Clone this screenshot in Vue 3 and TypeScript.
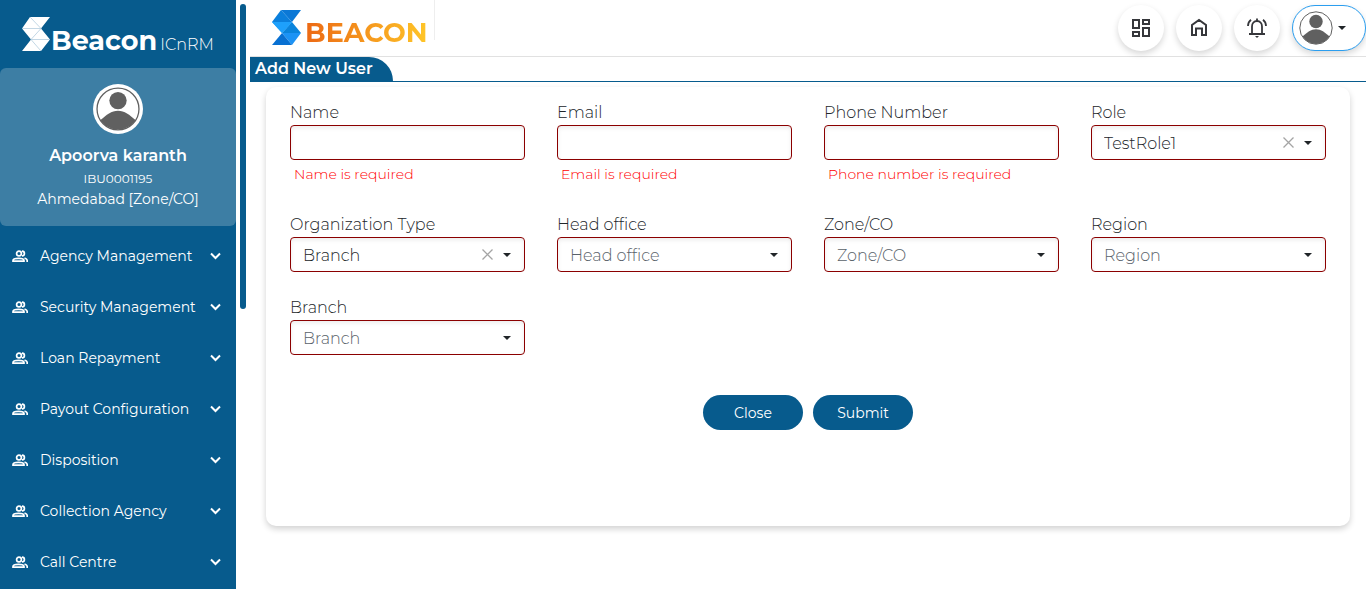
<script setup lang="ts">
import { reactive } from 'vue'

interface Field {
  id: string
  label: string
  kind: 'text' | 'select'
  error?: string
  clearable?: boolean
  options?: string[]
}

const menu: string[] = [
  'Agency Management',
  'Security Management',
  'Loan Repayment',
  'Payout Configuration',
  'Disposition',
  'Collection Agency',
  'Call Centre',
]

const fields: Field[] = [
  { id: 'name', label: 'Name', kind: 'text', error: 'Name is required' },
  { id: 'email', label: 'Email', kind: 'text', error: 'Email is required' },
  { id: 'phone', label: 'Phone Number', kind: 'text', error: 'Phone number is required' },
  { id: 'role', label: 'Role', kind: 'select', clearable: true, options: ['TestRole1'] },
  { id: 'orgType', label: 'Organization Type', kind: 'select', clearable: true, options: ['Branch'] },
  { id: 'headOffice', label: 'Head office', kind: 'select', options: [] },
  { id: 'zone', label: 'Zone/CO', kind: 'select', options: [] },
  { id: 'region', label: 'Region', kind: 'select', options: [] },
  { id: 'branch', label: 'Branch', kind: 'select', options: [] },
]

const form = reactive<Record<string, string>>({
  name: '',
  email: '',
  phone: '',
  role: 'TestRole1',
  orgType: 'Branch',
  headOffice: '',
  zone: '',
  region: '',
  branch: '',
})
</script>

<template>
  <div class="page">
    <aside class="sidebar">
      <div class="brand">
        <svg class="brand-mark" width="28" height="34" viewBox="0 0 28 34" aria-hidden="true">
          <path d="M8 0H28L19 11.500 28 22.500 19 34H0L9 22.500 0 11.500Z" fill="#fff" />
          <path d="M8 0L19 11.500H0M19 11.500L9 22.500H28M9 22.500L19 34" fill="none" stroke="#a9c6da" stroke-width=".7" />
        </svg>
        <span class="brand-name">Beacon</span>
        <span class="brand-suffix">ICnRM</span>
      </div>

      <section class="profile">
        <span class="avatar-ring">
          <svg width="44" height="44" viewBox="0 0 34 34" aria-hidden="true">
            <circle cx="17" cy="17" r="16.200" fill="#fff" stroke="#606060" stroke-width="1" />
            <circle cx="17" cy="10.500" r="6.700" fill="#606060" />
            <path d="M3.500 25.500C8 21.500 12 18.300 17 18.300S26 21.500 30.500 25.500A16 16 0 0 1 3.500 25.500Z" fill="#606060" />
          </svg>
        </span>
        <strong class="profile-name">Apoorva karanth</strong>
        <span class="profile-code">IBU0001195</span>
        <span class="profile-office">Ahmedabad [Zone/CO]</span>
      </section>

      <nav class="menu">
        <button v-for="item in menu" :key="item" type="button" class="menu-item">
          <svg width="16" height="14" viewBox="0 0 16 14" fill="none" stroke="#fff" stroke-width="1.700" aria-hidden="true">
            <circle cx="7" cy="4.500" r="2.400" />
            <path d="M1 12.200V11.500C1 10.100 4 9.300 6.500 9.300S12 10.100 12 11.500V12.200Z" />
            <path d="M10 2.100A2.400 2.400 0 0 1 10 6.900M12.500 9C14.200 9.600 15.200 10.300 15.200 11.500V13" />
          </svg>
          <span class="menu-label">{{ item }}</span>
          <svg width="11" height="8" viewBox="0 0 11 8" fill="none" stroke="#fff" stroke-width="2" aria-hidden="true">
            <path d="M1 1.500L5.500 6 10 1.500" />
          </svg>
        </button>
      </nav>
    </aside>

    <div class="gutter" aria-hidden="true"><div class="thumb"></div></div>

    <div class="main">
      <header class="topbar">
        <div class="logo">
          <svg width="29" height="35" viewBox="0 0 29 35" aria-hidden="true">
            <path d="M9 0H29L20 12Z" fill="#0b78d6" />
            <path d="M9 0L20 12H0Z" fill="#0b7fdc" />
            <path d="M0 12H20L10 23Z" fill="#1ea0fb" />
            <path d="M20 12L29 23H10Z" fill="#0a84dc" />
            <path d="M20 12L10 23L0 12Z" fill="#1ea0fb" />
            <path d="M10 23H29L20 35Z" fill="#1c93f5" />
            <path d="M10 23L20 35H0Z" fill="#0870d2" />
          </svg>
          <span class="logo-text">BEACON</span>
        </div>

        <div class="actions">
          <button type="button" class="round" aria-label="Dashboard">
            <svg width="20" height="20" viewBox="0 0 20 20" fill="none" stroke="#36373b" stroke-width="2" aria-hidden="true">
              <path d="M2 2H8V10H2ZM12 2H18V6H12ZM12 10H18V18H12ZM2 14H8V18H2Z" />
            </svg>
          </button>
          <button type="button" class="round" aria-label="Home">
            <svg width="20" height="20" viewBox="0 0 20 20" fill="none" stroke="#36373b" stroke-width="2" aria-hidden="true">
              <path d="M3 17V7L10 2 17 7V17H13V10.500H7V17Z" />
            </svg>
          </button>
          <button type="button" class="round" aria-label="Notifications">
            <svg width="20" height="20" viewBox="0 0 20 20" fill="none" stroke="#36373b" stroke-width="1.800" aria-hidden="true">
              <path d="M2 16H18M5 16V8.500C5 5.300 7 3 10 3S15 5.300 15 8.500V16M10 .5V3M1 8C1 5 2.300 3 4 1.700M19 8C19 5 17.700 3 16 1.700" />
              <path d="M8 18H12L10 20Z" fill="#36373b" stroke="none" />
            </svg>
          </button>
          <button type="button" class="account" aria-label="Account">
            <svg width="34" height="34" viewBox="0 0 34 34" aria-hidden="true">
              <circle cx="17" cy="17" r="16.200" fill="#fff" stroke="#606060" stroke-width="1" />
              <circle cx="17" cy="10.500" r="6.700" fill="#606060" />
              <path d="M3.500 25.500C8 21.500 12 18.300 17 18.300S26 21.500 30.500 25.500A16 16 0 0 1 3.500 25.500Z" fill="#606060" />
            </svg>
            <svg width="8" height="4" viewBox="0 0 8 4" aria-hidden="true"><path d="M0 0H8L4 4Z" fill="#212529" /></svg>
          </button>
        </div>
      </header>

      <div class="title-row"><h1 class="title">Add New User</h1></div>

      <form class="card" novalidate @submit.prevent>
        <div class="grid">
          <div v-for="f in fields" :key="f.id" class="field">
            <label :for="f.id">{{ f.label }}</label>
            <input v-if="f.kind === 'text'" :id="f.id" v-model="form[f.id]" class="control" type="text" />
            <div v-else class="select-wrap">
              <select :id="f.id" v-model="form[f.id]" class="control" :class="{ empty: !form[f.id] }">
                <option value="">{{ f.label }}</option>
                <option v-for="o in f.options" :key="o" :value="o">{{ o }}</option>
              </select>
              <button
                v-if="f.clearable && form[f.id]"
                type="button"
                class="clear"
                :aria-label="'Clear ' + f.label"
                @click="form[f.id] = ''"
              >
                <svg width="11" height="11" viewBox="0 0 11 11" stroke="#a4a4a4" stroke-width="1.300" aria-hidden="true">
                  <path d="M.5 .5L10.500 10.500M10.500 .5L.5 10.500" />
                </svg>
              </button>
              <svg class="caret" width="8" height="4" viewBox="0 0 8 4" aria-hidden="true"><path d="M0 0H8L4 4Z" fill="#212529" /></svg>
            </div>
            <p v-if="f.error && !form[f.id]" class="error">{{ f.error }}</p>
          </div>
        </div>
        <div class="buttons">
          <button type="button" class="pill">Close</button>
          <button type="submit" class="pill">Submit</button>
        </div>
      </form>
    </div>
  </div>
</template>

<style>
body {
  margin: 0;
  background: #fff;
}
</style>

<style scoped>
.page,
.page * {
  box-sizing: border-box;
}
.page {
  display: flex;
  min-height: 100vh;
  font-family: Montserrat, Inter, 'Open Sans', sans-serif;
  font-size: 16px;
  line-height: 24px;
  color: #212529;
}
button {
  font: inherit;
  border: 0;
  padding: 0;
  cursor: pointer;
}
svg {
  flex: none;
  display: block;
}
.sidebar {
  width: 236px;
  flex: none;
  background: #075b8d;
  color: #fff;
}
.brand {
  display: flex;
  align-items: baseline;
  height: 68px;
  padding: 17px 0 0 22px;
  white-space: nowrap;
}
.brand-mark {
  align-self: flex-start;
}
.brand-name {
  margin-left: 1px;
  font-size: 27px;
  font-weight: 700;
  line-height: 48px;
}
.brand-suffix {
  margin-left: 3px;
  font-size: 16px;
  font-weight: 300;
}
.profile {
  display: flex;
  flex-direction: column;
  align-items: center;
  height: 158px;
  padding-top: 16px;
  border-radius: 6px;
  background: #3d7ea4;
}
.avatar-ring {
  display: grid;
  place-items: center;
  width: 50px;
  height: 50px;
  border-radius: 50%;
  background: #fff;
}
.profile-name {
  margin-top: 10px;
  font-weight: 600;
}
.profile-code {
  font-size: 12px;
  line-height: 22px;
}
.profile-office {
  font-size: 14px;
  line-height: 18px;
}
.menu {
  padding-top: 4px;
}
.menu-item {
  display: flex;
  align-items: center;
  width: 100%;
  height: 51px;
  padding: 0 15px 0 12px;
  background: none;
  color: #fff;
  font-size: 14px;
  text-align: left;
}
.menu-label {
  flex: 1;
  margin-left: 12px;
  white-space: nowrap;
}
.gutter {
  flex: none;
  width: 14px;
  padding: 4px;
}
.thumb {
  height: 305px;
  border-radius: 3px;
  background: #075b8d;
}
.main {
  flex: 1;
  min-width: 0;
}
.topbar {
  display: flex;
  justify-content: space-between;
  height: 57px;
  border-bottom: 1px solid #e1e1e1;
}
.logo {
  display: flex;
  align-items: flex-start;
  gap: 4px;
  height: 40px;
  padding: 10px 6px 0 22px;
  border-right: 1px solid #eee;
}
.logo-text {
  padding-top: 5px;
  font-size: 27px;
  font-weight: 700;
  line-height: 36px;
  background: linear-gradient(90deg, #ec6814, #ffc628);
  background-clip: text;
  color: transparent;
}
.actions {
  display: flex;
  gap: 12px;
  padding-top: 5px;
}
.round {
  display: grid;
  place-items: center;
  width: 46px;
  height: 46px;
  border-radius: 50%;
  background: #fff;
  box-shadow: 0 3px 6px rgba(0, 0, 0, 0.16);
}
.account {
  display: flex;
  align-items: center;
  gap: 5px;
  width: 74px;
  height: 46px;
  padding-left: 6px;
  border: 1px solid #2b9eef;
  border-radius: 23px;
  background: #fff;
  box-shadow: 0 3px 6px rgba(0, 0, 0, 0.16);
}
.title-row {
  border-bottom: 1px solid #075b8d;
}
.title {
  width: 143px;
  height: 24px;
  margin: 0;
  padding-left: 5px;
  border-radius: 0 24px 0 0;
  background: #075b8d;
  color: #fff;
  font-size: 16px;
  font-weight: 600;
  line-height: 24px;
  white-space: nowrap;
}
.card {
  margin: 5px 16px 0;
  padding: 14px 24px 96px;
  border-radius: 10px;
  box-shadow: 0 3px 6px rgba(0, 0, 0, 0.18);
}
.grid {
  display: grid;
  grid-template-columns: repeat(4, minmax(0, 1fr));
  gap: 24px 32px;
}
.field {
  font-weight: 300;
}
label {
  display: block;
}
.control {
  display: block;
  width: 100%;
  height: 35px;
  padding: 2px 12px 0;
  border: 1px solid #8b0000;
  border-radius: 4px;
  background: #fff;
  box-shadow: inset 0 2px 4px rgba(0, 0, 0, 0.08);
  color: #212529;
  font: inherit;
  appearance: none;
}
.control.empty {
  color: #59626a;
}
.select-wrap {
  position: relative;
}
.clear {
  position: absolute;
  top: 12px;
  right: 32px;
  background: none;
}
.caret {
  position: absolute;
  top: 16px;
  right: 14px;
  pointer-events: none;
}
.error {
  margin: 2px 0 3px 4px;
  color: #f00;
  font-size: 14px;
}
.buttons {
  display: flex;
  justify-content: center;
  gap: 10px;
  margin-top: 40px;
}
.pill {
  width: 100px;
  height: 35px;
  border-radius: 18px;
  background: #075b8d;
  color: #fff;
  font-size: 14px;
}
</style>
